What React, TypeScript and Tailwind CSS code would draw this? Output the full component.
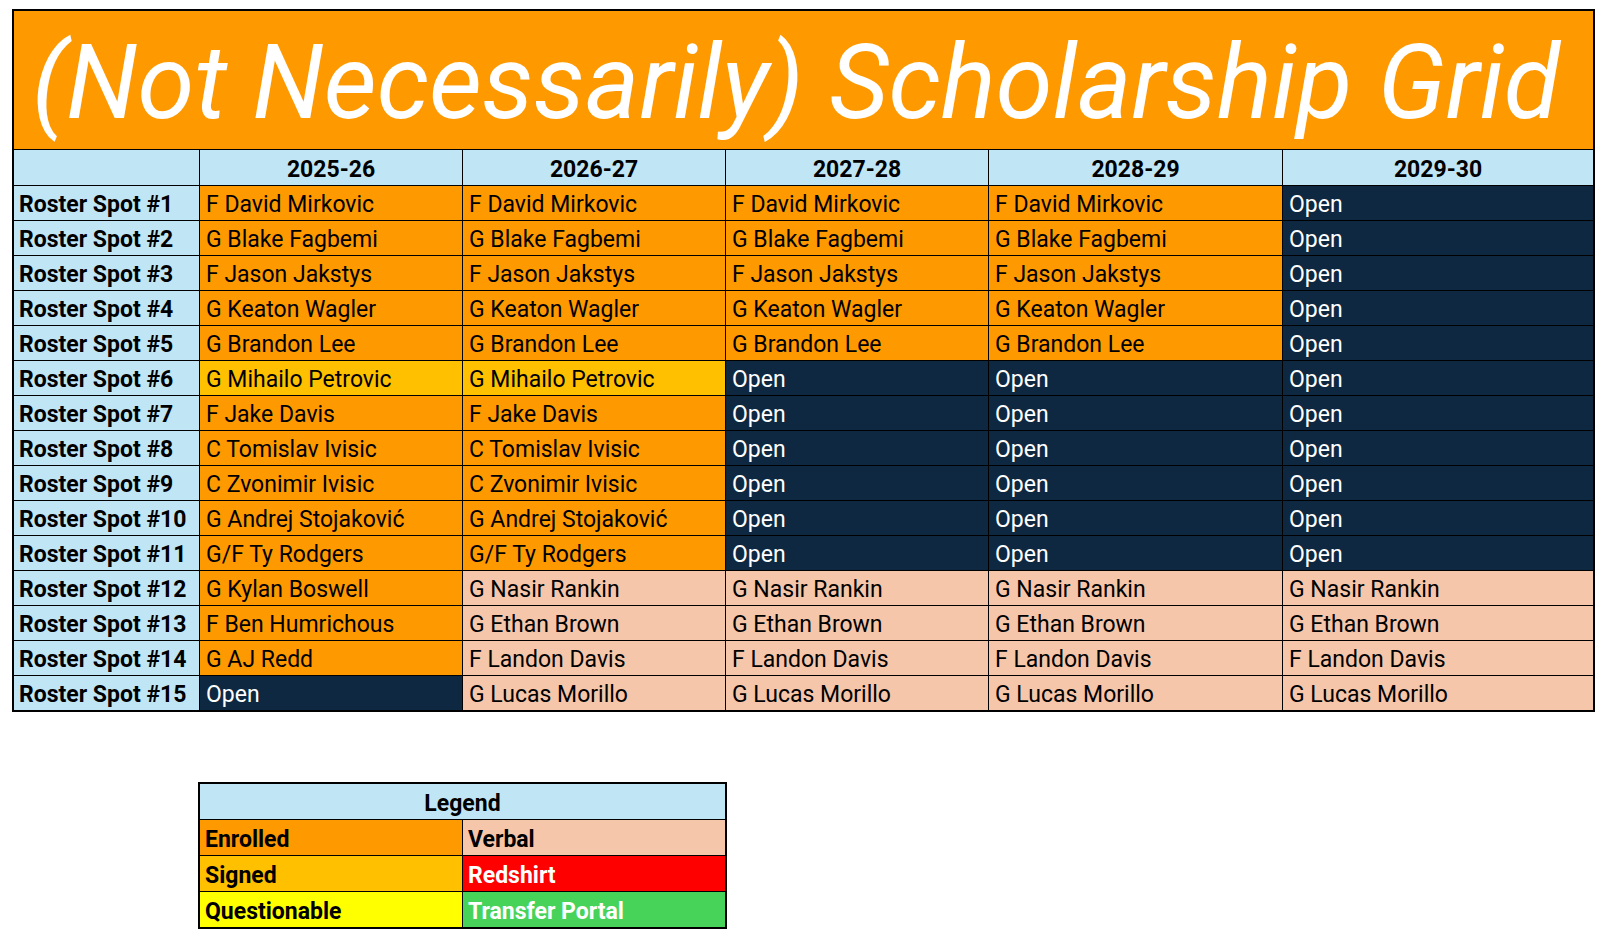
import React from 'react';

type Cell = { text: string; kind: 'enrolled' | 'signed' | 'verbal' | 'open' };

const years = ['2025-26', '2026-27', '2027-28', '2028-29', '2029-30'];

const kindClass: Record<Cell['kind'], string> = {
  enrolled: 'bg-[#ff9900] text-black',
  signed: 'bg-[#ffc000] text-black',
  verbal: 'bg-[#f5c6aa] text-black',
  open: 'bg-[#0e2841] text-white',
};

const e = (text: string): Cell => ({ text, kind: 'enrolled' });
const s = (text: string): Cell => ({ text, kind: 'signed' });
const v = (text: string): Cell => ({ text, kind: 'verbal' });
const o: Cell = { text: 'Open', kind: 'open' };

const four = (name: string) => [e(name), e(name), e(name), e(name), o];
const two = (name: string) => [e(name), e(name), o, o, o];

const rows: Cell[][] = [
  four('F David Mirkovic'),
  four('G Blake Fagbemi'),
  four('F Jason Jakstys'),
  four('G Keaton Wagler'),
  four('G Brandon Lee'),
  [s('G Mihailo Petrovic'), s('G Mihailo Petrovic'), o, o, o],
  two('F Jake Davis'),
  two('C Tomislav Ivisic'),
  two('C Zvonimir Ivisic'),
  two('G Andrej Stojaković'),
  two('G/F Ty Rodgers'),
  [e('G Kylan Boswell'), v('G Nasir Rankin'), v('G Nasir Rankin'), v('G Nasir Rankin'), v('G Nasir Rankin')],
  [e('F Ben Humrichous'), v('G Ethan Brown'), v('G Ethan Brown'), v('G Ethan Brown'), v('G Ethan Brown')],
  [e('G AJ Redd'), v('F Landon Davis'), v('F Landon Davis'), v('F Landon Davis'), v('F Landon Davis')],
  [o, v('G Lucas Morillo'), v('G Lucas Morillo'), v('G Lucas Morillo'), v('G Lucas Morillo')],
];

const legend = [
  [
    { label: 'Enrolled', cls: 'bg-[#ff9900] text-black' },
    { label: 'Verbal', cls: 'bg-[#f5c6aa] text-black' },
  ],
  [
    { label: 'Signed', cls: 'bg-[#ffc000] text-black' },
    { label: 'Redshirt', cls: 'bg-[#ff0000] text-white' },
  ],
  [
    { label: 'Questionable', cls: 'bg-[#ffff00] text-black' },
    { label: 'Transfer Portal', cls: 'bg-[#47d35a] text-white' },
  ],
];

export default function App() {
  return (
    <div className="h-[947px] w-[1622px] overflow-hidden bg-white font-['Roboto',sans-serif] text-[23px] leading-none">
      <div className="pl-[12px] pt-[9px]">
        <div className="w-[1583px] border-2 border-black bg-black">
          <div className="flex h-[138px] items-center bg-[#ff9900] pl-[18px] pt-[4px] text-[103px] italic text-white">
            (Not Necessarily) Scholarship Grid
          </div>
          <div className="mt-px grid grid-cols-[185px_262px_262px_262px_293px_310px] gap-px">
            <div className="h-[35px] bg-[#c0e6f5]" />
            {years.map((y) => (
              <div key={y} className="flex h-[35px] items-center justify-center bg-[#c0e6f5] pt-[3px] font-bold">
                {y}
              </div>
            ))}
            {rows.map((row, i) => (
              <React.Fragment key={i}>
                <div className="flex h-[34px] items-center bg-[#c0e6f5] pl-[5px] pt-[3px] font-bold">
                  Roster Spot #{i + 1}
                </div>
                {row.map((c, j) => (
                  <div key={j} className={`flex h-[34px] items-center pl-[6px] pt-[3px] ${kindClass[c.kind]}`}>
                    {c.text}
                  </div>
                ))}
              </React.Fragment>
            ))}
          </div>
        </div>

        <div className="ml-[186px] mt-[70px] w-[529px] border-2 border-black bg-black font-bold">
          <div className="flex h-[35px] items-center justify-center bg-[#c0e6f5] pt-[3px]">Legend</div>
          <div className="mt-px grid grid-cols-[262px_262px] gap-px">
            {legend.map((pair, i) => (
              <React.Fragment key={i}>
                {pair.map((l) => (
                  <div key={l.label} className={`flex h-[35px] items-center pl-[5px] pt-[3px] ${l.cls}`}>
                    {l.label}
                  </div>
                ))}
              </React.Fragment>
            ))}
          </div>
        </div>
      </div>
    </div>
  );
}
